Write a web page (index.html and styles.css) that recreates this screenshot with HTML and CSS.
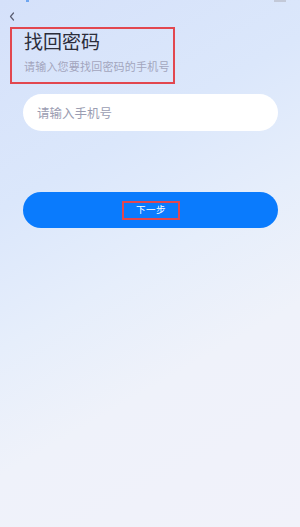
FILE: index.html
```html
<!DOCTYPE html>
<html lang="zh-CN">
<head>
    <meta charset="UTF-8">
    <meta name="viewport" content="width=device-width, initial-scale=1.0">
    <title>找回密码</title>
    <link rel="stylesheet" href="styles.css">
</head>
<body>
    <div class="page">
        <!-- status bar remnants -->
        <div class="status">
            <span class="status-dot"></span>
            <span class="status-bars"></span>
        </div>

        <!-- back -->
        <div class="nav">
            <svg class="back" width="6" height="9" viewBox="0 0 6 9">
                <path d="M4.5 1 L1.5 4.5 L4.5 8" fill="none" stroke="#5b5e72" stroke-width="1.2" stroke-linecap="round" stroke-linejoin="round"/>
            </svg>
        </div>

        <!-- heading -->
        <div class="head marked">
            <h1>找回密码</h1>
            <p>请输入您要找回密码的手机号</p>
        </div>

        <!-- phone -->
        <div class="field">
            <input type="tel" placeholder="请输入手机号">
        </div>

        <button class="next"><span class="next-label marked">下一步</span></button>
    </div>
</body>
</html>
```

FILE: styles.css
```css
body {
    margin: 0;
    font-family: "Noto Sans CJK SC", "Noto Sans", sans-serif;
}

.page {
    height: 527px;
    box-sizing: border-box;
    padding: 0 22px 0 23px;
    background: linear-gradient(150deg, #d5e1fa 0%, #dbe7fb 30%, #e6eefb 50%, #eff2fa 68%, #f1f2fa 100%);
}

.status {
    position: relative;
    height: 8px;
}

.status-dot {
    position: absolute;
    left: 3px;
    top: 0;
    width: 3px;
    height: 2px;
    background: #6fa6f0;
}

.status-bars {
    position: absolute;
    right: -8px;
    top: 0;
    width: 12px;
    height: 2px;
    background: #c3c9d8;
}

.nav {
    height: 19px;
    display: flex;
    align-items: center;
    margin-left: -14px;
}

.back {
    display: block;
    margin-top: -3px;
}

/* red outline boxes */
.marked {
    border: 2px solid #e2474f;
}

.head {
    width: 165px;
    box-sizing: border-box;
    margin-left: -13px;
    padding: 0 0 9px 12px;
}

.head h1 {
    margin: 0;
    font-size: 19px;
    line-height: 24px;
    font-weight: 400;
    color: #2b2d3a;
}

.head p {
    margin: 6px 0 0;
    font-size: 11px;
    line-height: 14px;
    letter-spacing: 0.2px;
    color: #a3a5bd;
}

.field {
    margin-top: 10px;
}

.field input {
    display: block;
    width: 100%;
    height: 37px;
    box-sizing: border-box;
    border: none;
    border-radius: 19px;
    padding: 0 14px;
    background: #fff;
    font-family: inherit;
    font-size: 12.5px;
    color: #333;
    outline: none;
}

.field input::placeholder {
    color: #9b9db2;
}

.next {
    display: flex;
    justify-content: center;
    align-items: center;
    width: 100%;
    height: 36px;
    margin-top: 61px;
    border: none;
    border-radius: 18px;
    background: #0a7bfd;
    cursor: pointer;
    padding: 0;
}

.next-label {
    padding: 1px 12px 2px;
    font-family: inherit;
    font-size: 9.5px;
    line-height: 12px;
    color: #fff;
    margin-top: 1px;
}
```
